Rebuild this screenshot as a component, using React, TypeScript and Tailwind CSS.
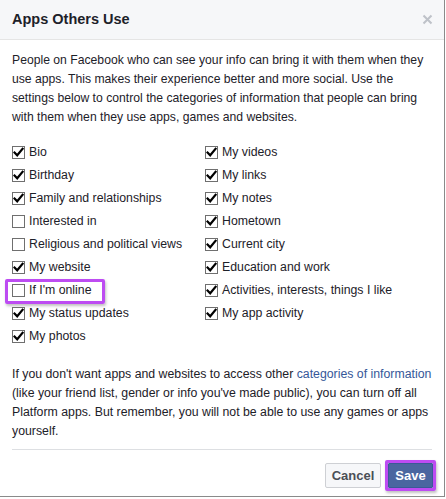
import React from "react";

type Item = { label: string; checked: boolean; mark?: boolean };

const left: Item[] = [
  { label: "Bio", checked: true },
  { label: "Birthday", checked: true },
  { label: "Family and relationships", checked: true },
  { label: "Interested in", checked: false },
  { label: "Religious and political views", checked: false },
  { label: "My website", checked: true },
  { label: "If I'm online", checked: false, mark: true },
  { label: "My status updates", checked: true },
  { label: "My photos", checked: true },
];

const right: Item[] = [
  { label: "My videos", checked: true },
  { label: "My links", checked: true },
  { label: "My notes", checked: true },
  { label: "Hometown", checked: true },
  { label: "Current city", checked: true },
  { label: "Education and work", checked: true },
  { label: "Activities, interests, things I like", checked: true },
  { label: "My app activity", checked: true },
];

function Box({ checked }: { checked: boolean }) {
  return (
    <span className="flex h-[13px] w-[13px] shrink-0 items-center justify-center border border-[#6f6f6f] bg-white">
      {checked && (
        <svg width="11" height="11" viewBox="0 0 11 11" fill="none">
          <path d="M1.5 5.5 4.2 8.3 9.6 1.8" stroke="#000" strokeWidth="2.2" strokeLinecap="square" />
        </svg>
      )}
    </span>
  );
}

function Row({ item }: { item: Item }) {
  return (
    <div className="relative flex h-[23px] items-center gap-[4px] text-[12.3px]">
      {item.mark && (
        <span className="absolute left-[-7px] top-[0px] h-[25px] w-[100px] rounded-[2px] border-[3px] border-[#bd4cf2] shadow-[1px_2px_3px_rgba(0,0,0,0.25)]" />
      )}
      <Box checked={item.checked} />
      <span>{item.label}</span>
    </div>
  );
}

export default function App() {
  return (
    <div className="h-[499px] w-[446px] bg-white font-['Liberation_Sans',Arial,sans-serif] text-[12px] leading-[19px] text-[#1d2129]">
      <div className="h-[497px] w-[445px] border-r border-b border-[#8a8a8a]">
        {/* header */}
        <div className="flex h-[40px] items-center justify-between border-b border-[#e5e5e5] bg-[#f6f7f9] pl-3 pr-[11px]">
          <h1 className="text-[14.5px] font-bold text-[#1d2129]">Apps Others Use</h1>
          <svg width="11" height="11" viewBox="0 0 11 11" aria-hidden="true">
            <path d="M1.5 1.5l8 8M9.5 1.5l-8 8" stroke="#bec2c9" strokeWidth="2" />
          </svg>
        </div>

        <div className="px-3 pt-[11px]">
          <p className="whitespace-nowrap text-[12.2px]">
            People on Facebook who can see your info can bring it with them when they
            <br />
            use apps. This makes their experience better and more social. Use the
            <br />
            settings below to control the categories of information that people can bring
            <br />
            with them when they use apps, games and websites.
          </p>

          <div className="mt-[14px] grid grid-cols-[193px_1fr]">
            <div>
              {left.map((it) => (
                <Row key={it.label} item={it} />
              ))}
            </div>
            <div>
              {right.map((it) => (
                <Row key={it.label} item={it} />
              ))}
            </div>
          </div>

          <p className="mt-[17px] text-[12.3px]">
            If you don't want apps and websites to access other{" "}
            <span className="text-[#365899]">categories of information</span> (like your friend list, gender or info
            you've made public), you can turn off all Platform apps. But remember, you will not be able to use any
            games or apps yourself.
          </p>

          <div className="mt-[8px] border-t border-[#dddfe2]" />

          <div className="mt-[10px] -mr-[4px] flex items-center justify-end gap-[4px]">
            <button
              type="button"
              className="h-[25px] w-[56px] rounded-[2px] border border-[#ced0d4] bg-[#f6f7f9] text-[13px] font-bold text-[#4b4f56]"
            >
              Cancel
            </button>
            <span className="rounded-[2px] border-[3px] border-[#bd4cf2] shadow-[1px_2px_3px_rgba(0,0,0,0.25)]">
              <button
                type="button"
                className="block h-[25px] w-[45px] rounded-[1px] border border-[#3b5998] bg-[#4a66a0] text-[13px] font-bold text-white"
              >
                Save
              </button>
            </span>
          </div>
        </div>
      </div>
    </div>
  );
}
